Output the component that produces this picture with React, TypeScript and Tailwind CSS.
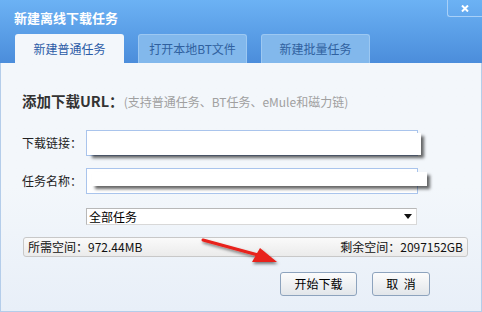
import React from "react";

const font = { fontFamily: '"Noto Sans CJK SC", "Liberation Sans", sans-serif' };

export default function App() {
  return (
    <div className="w-[482px] h-[312px] overflow-hidden relative flex flex-col" style={font}>
      {/* header */}
      <div className="h-[63px] bg-gradient-to-b from-[#6cb2f4] to-[#4b8ddb] flex flex-col relative">
        <div className="h-[34px] flex items-center pl-[14px]">
          <span className="text-white font-bold text-[13px] leading-none">新建离线下载任务</span>
        </div>
        <div className="absolute right-0 top-0 w-[35px] h-[17px] border-l border-b border-[#a8d0f8] rounded-bl-[3px] flex items-center justify-center">
          <svg width="8" height="7" viewBox="0 0 8 7">
            <path d="M1 0.5 L7 6.5 M7 0.5 L1 6.5" stroke="#fff" strokeWidth="2" />
          </svg>
        </div>
        <div className="flex h-[29px] pl-[15px] gap-[14px] items-end">
          <div className="w-[109px] h-[29px] bg-[#f3f7fb] rounded-t-[3px] flex items-center justify-center text-[12px] text-[#2b5ba6]">
            新建普通任务
          </div>
          <div className="w-[109px] h-[29px] bg-[#82b8ec] border border-b-0 border-[#9cc8f2] rounded-t-[3px] flex items-center justify-center text-[12px] text-[#30619f]">
            打开本地BT文件
          </div>
          <div className="w-[109px] h-[29px] bg-[#82b8ec] border border-b-0 border-[#9cc8f2] rounded-t-[3px] flex items-center justify-center text-[12px] text-[#30619f]">
            新建批量任务
          </div>
        </div>
      </div>
      {/* body */}
      <div className="flex-1 bg-gradient-to-b from-[#f3f7fb] via-[#f3f7fb] to-[#e8eff8] border-l border-r border-b border-[#b4cdea] flex flex-col pl-[21px] relative">
        <div className="mt-[27px] flex items-baseline h-[20px]">
          <span className="text-[14.5px] font-bold text-[#333]">添加下载URL：</span>
          <span className="text-[12px] text-[#a0a0a0]">(支持普通任务、BT任务、eMule和磁力链)</span>
        </div>
        <div className="mt-[20px] flex items-center h-[26px]">
          <span className="w-[64px] text-[12px] text-[#222]">下载链接：</span>
          <div className="w-[332px] h-[26px] border border-[#a9c4ec] bg-white relative">
            <div className="absolute left-[2px] top-[2px] w-[332px] h-[22px] bg-white shadow-[3px_3px_3px_rgba(0,0,0,0.6)]" />
          </div>
        </div>
        <div className="mt-[12px] flex items-center h-[26px]">
          <span className="w-[64px] text-[12px] text-[#222]">任务名称：</span>
          <div className="w-[332px] h-[26px] border border-[#a9c4ec] bg-white relative">
            <div className="absolute left-[5px] top-[3px] w-[335px] h-[14px] bg-white shadow-[3px_3px_3px_rgba(0,0,0,0.6)]" />
          </div>
        </div>
        <div className="mt-[14px] flex items-center h-[17px]">
          <span className="w-[64px]" />
          <div className="w-[331px] h-[17px] border border-[#b8b8b8] border-b-[#d8d8d8] border-r-[#d8d8d8] bg-white flex items-center justify-between pl-[2px] pr-[4px]">
            <span className="text-[12px] text-black leading-none">全部任务</span>
            <svg width="8" height="5" viewBox="0 0 8 5"><path d="M0 0 H8 L4 5 Z" fill="#111" /></svg>
          </div>
        </div>
        <div className="mt-[12px] ml-[1px] w-[445px] h-[20px] rounded-[3px] border border-[#c8c8c8] bg-gradient-to-b from-[#fafafa] to-[#ebebeb] flex items-center justify-between px-[4px] text-[12px] text-[#111]">
          <span>所需空间：972.44MB</span>
          <span>剩余空间：2097152GB</span>
        </div>
        <div className="mt-[15px] flex justify-end pr-[51px] gap-[15px]">
          <button className="w-[77px] h-[24px] rounded-[3px] border border-[#8da3bd] bg-gradient-to-b from-[#fcfcfc] to-[#e2e6ea] text-[12px] text-black">
            开始下载
          </button>
          <button className="w-[58px] h-[24px] rounded-[3px] border border-[#8da3bd] bg-gradient-to-b from-[#fcfcfc] to-[#e2e6ea] text-[12px] text-black">
            取&nbsp;&nbsp;消
          </button>
        </div>
      </div>
      {/* red arrow */}
      <svg className="absolute left-0 top-0 pointer-events-none" width="482" height="312">
        <defs>
          <filter id="sh" x="-20%" y="-20%" width="140%" height="140%">
            <feDropShadow dx="1" dy="2" stdDeviation="1.5" floodColor="#000" floodOpacity="0.5" />
          </filter>
        </defs>
        <g filter="url(#sh)">
          <path d="M203 240 L258 255" stroke="#e8201a" strokeWidth="3" strokeLinecap="round" />
          <path d="M277 262 L252 262 L260 248 Z" fill="#e8201a" />
        </g>
      </svg>
    </div>
  );
}
